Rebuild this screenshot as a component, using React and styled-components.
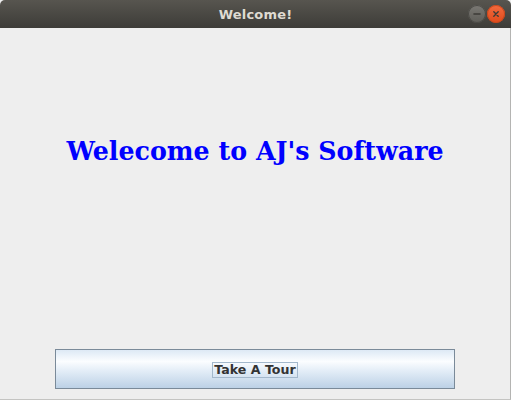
import React from "react";
import styled, { createGlobalStyle } from "styled-components";

const Global = createGlobalStyle`
  html, body { margin: 0; padding: 0; background: #eeeeee; }
  #root { width: 511px; height: 400px; }
`;

const Window = styled.div`
  width: 511px;
  height: 400px;
  display: flex;
  flex-direction: column;
  background: #eeeeee;
  overflow: hidden;
`;

const TitleBar = styled.div`
  height: 28px;
  flex: none;
  display: flex;
  align-items: center;
  justify-content: center;
  position: relative;
  background: linear-gradient(#57554f, #3d3c38);
  border-radius: 5px 5px 0 0;
`;

const Title = styled.span`
  font-family: "DejaVu Sans", sans-serif;
  font-weight: bold;
  font-size: 13px;
  color: #dfdbd2;
  letter-spacing: 0.2px;
`;

const Controls = styled.div`
  position: absolute;
  right: 6px;
  top: 5px;
  display: flex;
  gap: 1px;
`;

const CtlButton = styled.div`
  width: 18px;
  height: 18px;
  border-radius: 50%;
  display: flex;
  align-items: center;
  justify-content: center;
  background: ${(p) =>
    p.$close
      ? "linear-gradient(#f26b3f, #df4a1b)"
      : "linear-gradient(#7b7974, #5d5c57)"};
  box-shadow: inset 0 0 0 1px ${(p) => (p.$close ? "#c9461b" : "#4a4945")};
`;

const Body = styled.div`
  flex: 1;
  display: flex;
  flex-direction: column;
  align-items: center;
  border-right: 1px solid #b4b4b2;
  border-bottom: 1px solid #c4c4c2;
`;

const Heading = styled.h1`
  margin: 108px 0 0 0;
  font-family: "DejaVu Serif", serif;
  font-weight: bold;
  font-size: 25.3px;
  line-height: 30px;
  color: #0000ff;
`;

const TourButton = styled.button`
  margin-top: auto;
  margin-bottom: 10px;
  width: 400px;
  height: 40px;
  border: 1px solid #7a8a99;
  background: linear-gradient(#dde9f5 0%, #fbfdff 30%, #e3edf7 55%, #bcd1e6 100%);
  display: flex;
  align-items: center;
  justify-content: center;
  padding: 0;
`;

const Label = styled.span`
  font-family: "DejaVu Sans", sans-serif;
  font-weight: bold;
  font-size: 12.6px;
  line-height: 14px;
  color: #333333;
  padding: 0 1px;
  margin-top: 1px;
  border: 1px solid #a3b8cc;
`;

export default function App() {
  return (
    <>
      <Global />
      <Window>
        <TitleBar>
          <Title>Welcome!</Title>
          <Controls>
            <CtlButton>
              <svg width="10" height="10" viewBox="0 0 10 10">
                <path d="M2 5h6" stroke="#3c3b37" strokeWidth="1.6" strokeLinecap="round" />
              </svg>
            </CtlButton>
            <CtlButton $close>
              <svg width="10" height="10" viewBox="0 0 10 10">
                <path d="M2.8 2.8l4.4 4.4M7.2 2.8l-4.4 4.4" stroke="#3c3b37" strokeWidth="1.4" strokeLinecap="round" />
              </svg>
            </CtlButton>
          </Controls>
        </TitleBar>
        <Body>
          <Heading>Welecome to AJ's Software</Heading>
          <TourButton>
            <Label>Take A Tour</Label>
          </TourButton>
        </Body>
      </Window>
    </>
  );
}
